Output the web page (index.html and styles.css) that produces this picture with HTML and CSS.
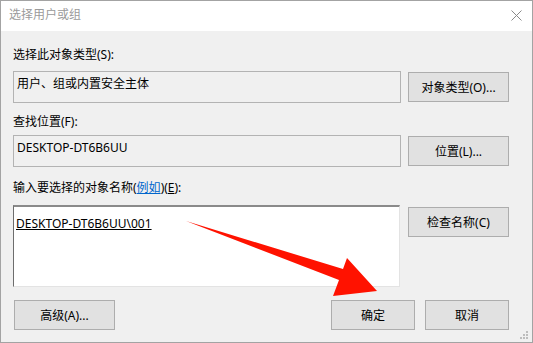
FILE: index.html
```html
<!DOCTYPE html>
<html lang="zh-CN">
<head>
    <meta charset="UTF-8">
    <title>选择用户或组</title>
    <link rel="stylesheet" href="styles.css">
</head>
<body>
    <div class="window">
        <div class="titlebar">
            <span class="title">选择用户或组</span>
            <svg class="close" width="11" height="11" viewBox="0 0 11 11">
                <path d="M0.5 0.5 L10.5 10.5 M10.5 0.5 L0.5 10.5" stroke="#8a8a8a" stroke-width="1" fill="none"/>
            </svg>
        </div>

        <div class="content">
            <div class="label label-first">选择此对象类型(S):</div>
            <div class="row">
                <div class="field">用户、组或内置安全主体</div>
                <button class="btn">对象类型(O)...</button>
            </div>

            <div class="label label-second">查找位置(F):</div>
            <div class="row">
                <div class="field">DESKTOP-DT6B6UU</div>
                <button class="btn">位置(L)...</button>
            </div>

            <div class="label label-third">输入要选择的对象名称(<a class="link" href="#">例如</a>)(<u>E</u>):</div>
            <div class="row row-top">
                <div class="names"><u>DESKTOP-DT6B6UU\001</u></div>
                <button class="btn btn-check">检查名称(C)</button>
            </div>

            <div class="footer">
                <button class="btn btn-advanced">高级(A)...</button>
                <div class="spacer"></div>
                <button class="btn btn-small">确定</button>
                <button class="btn btn-small">取消</button>
            </div>
        </div>

        <svg class="grip" width="10" height="9" viewBox="0 0 10 9">
            <rect x="7" y="0" width="2" height="2" fill="#bdbdbd"/>
            <rect x="4" y="3" width="2" height="2" fill="#bdbdbd"/>
            <rect x="7" y="3" width="2" height="2" fill="#bdbdbd"/>
            <rect x="1" y="6" width="2" height="2" fill="#bdbdbd"/>
            <rect x="4" y="6" width="2" height="2" fill="#bdbdbd"/>
            <rect x="7" y="6" width="2" height="2" fill="#bdbdbd"/>
        </svg>

        <!-- red annotation arrow pointing at the OK button -->
        <svg class="arrow" width="533" height="343" viewBox="0 0 533 343">
            <polygon points="186,221 343,269 347,258 377,291 333,296 339,280" fill="#ff1200"/>
        </svg>
    </div>
</body>
</html>
```

FILE: styles.css
```css
body {
    margin: 0;
    font-family: "Noto Sans", "Noto Sans CJK SC", sans-serif;
    font-size: 12px;
    color: #000;
}

.window {
    position: relative;
    width: 533px;
    height: 343px;
    box-sizing: border-box;
    border: 1px solid #a3a3a3;
    background-color: #f0f0f0;
    overflow: hidden;
}

.titlebar {
    height: 30px;
    background-color: #fff;
    display: flex;
    align-items: center;
    padding: 0 10px 0 8px;
}

.title {
    color: #9a9a9a;
    flex: 1;
    line-height: 16px;
    margin-top: -2px;
}

.close {
    display: block;
    margin-top: -1px;
}

.content {
    padding: 16px 23px 0 12px;
}

.label {
    line-height: 16px;
}

.label-first {
    margin-bottom: 8px;
}

.label-second {
    margin-top: 11px;
    margin-bottom: 5px;
}

.label-third {
    margin-top: 13px;
    margin-bottom: 9px;
}

.link {
    color: #0066cc;
    text-decoration: underline;
}

.row {
    display: flex;
    align-items: center;
    gap: 7px;
}

.row-top {
    align-items: flex-start;
}

.field {
    width: 388px;
    height: 32px;
    box-sizing: border-box;
    border: 1px solid #b3b3b3;
    background-color: #f0f0f0;
    padding: 4px 3px;
    line-height: 16px;
}

.names {
    width: 387px;
    height: 82px;
    box-sizing: border-box;
    background-color: #fff;
    border: 1px solid #e3e3e3;
    border-top: 2px solid #8a8a8a;
    border-left: 1px solid #6d6d6d;
    padding: 9px 2px;
    line-height: 16px;
}

.btn {
    width: 101px;
    height: 30px;
    box-sizing: border-box;
    border: 1px solid #adadad;
    background-color: #e1e1e1;
    font-family: inherit;
    font-size: 12px;
    color: #000;
    padding: 0;
    cursor: pointer;
}

.btn-check {
    margin-top: 2px;
    margin-left: 1px;
}

.footer {
    display: flex;
    gap: 10px;
    margin-top: 13px;
}

.btn-advanced {
    margin-left: 1px;
}

.btn-small {
    width: 84px;
}

.spacer {
    flex: 1;
}

.grip {
    position: absolute;
    right: 3px;
    bottom: 2px;
}

.arrow {
    position: absolute;
    left: -1px;
    top: -1px;
    pointer-events: none;
}
```
